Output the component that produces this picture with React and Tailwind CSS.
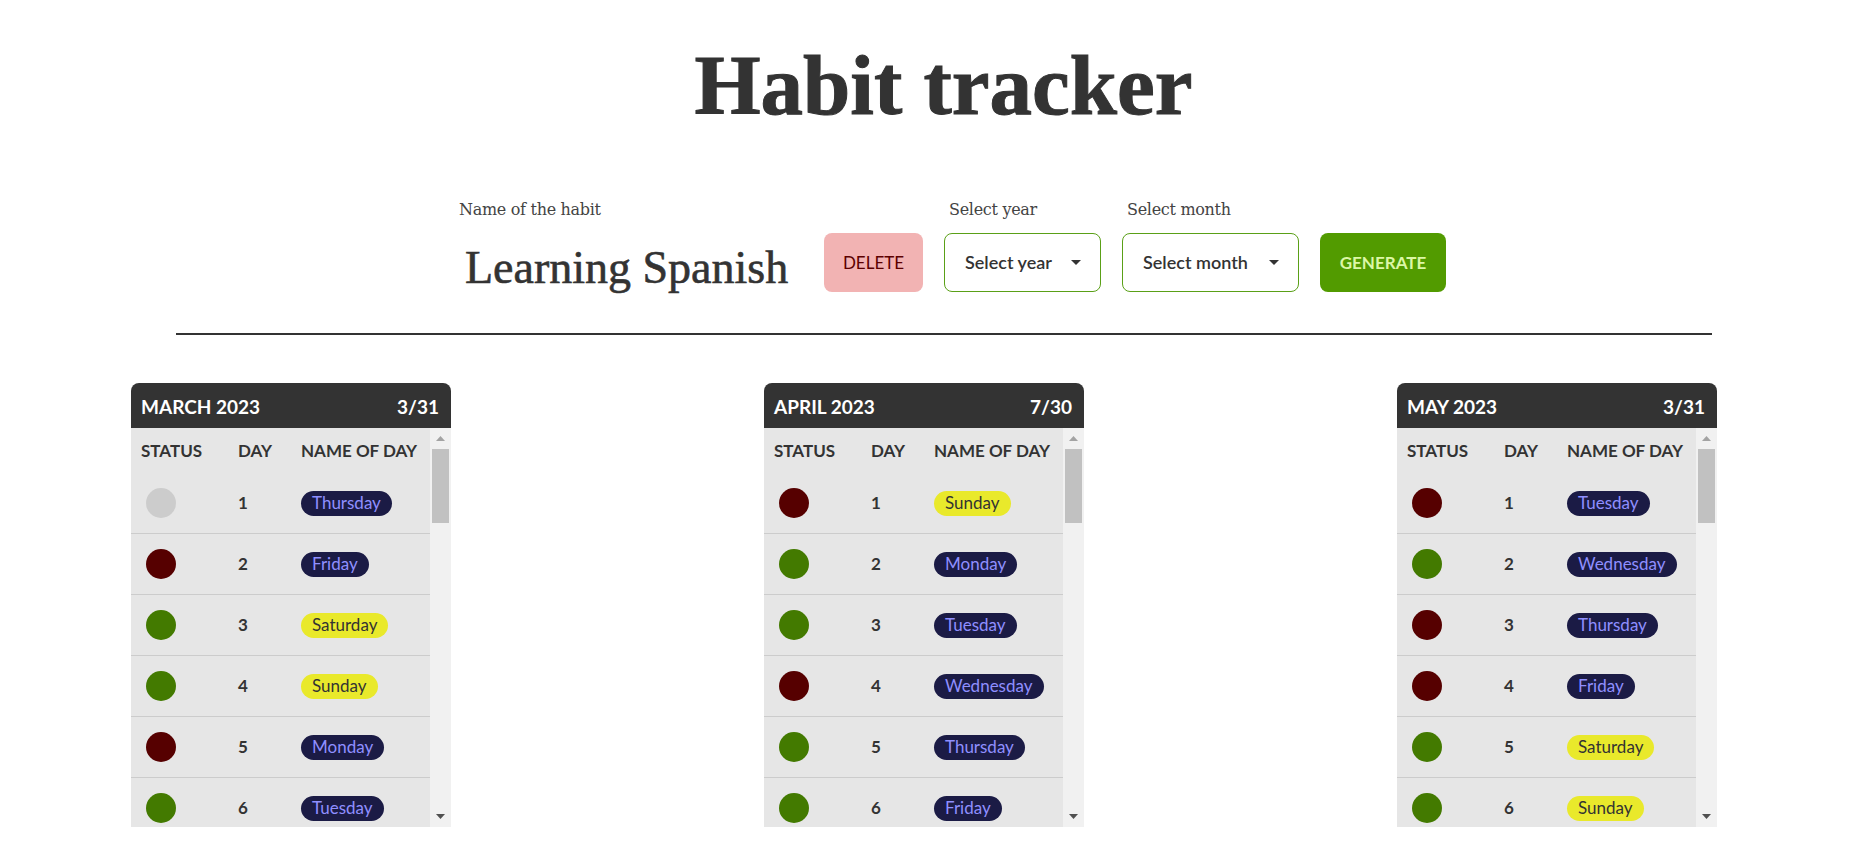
import React from 'react';

const DAY_NAMES = ['Sunday', 'Monday', 'Tuesday', 'Wednesday', 'Thursday', 'Friday', 'Saturday'];

// s: 'g' done, 'r' missed, 'n' not yet
const months = [
  { title: 'MARCH 2023', days: 31, start: 4, status: 'nrggrg'.padEnd(31, 'n'), done: 3 },
  { title: 'APRIL 2023', days: 30, start: 0, status: 'rggrggrgrgg'.padEnd(30, 'n'), done: 7 },
  { title: 'MAY 2023', days: 31, start: 2, status: 'rgrrgg'.padEnd(31, 'n'), done: 3 },
];

// only the rows that fit in the visible part of the list
const VISIBLE_ROWS = 6;

const dotColor = {
  g: 'bg-[#437a00]',
  r: 'bg-[#560000]',
  n: 'bg-[#cccccc]',
};

const DayPill = ({ name }) => {
  const weekend = name === 'Saturday' || name === 'Sunday';
  return (
    <span
      className={
        weekend
          ? 'inline-flex items-center h-[25px] px-[11px] rounded-full bg-[#e9e92b] text-[#333333] text-[17px]'
          : 'inline-flex items-center h-[25px] px-[11px] rounded-full bg-[#1b1b45] text-[#8f8fff] text-[17px]'
      }
    >
      {name}
    </span>
  );
};

const MonthTable = ({ month }) => {
  const rows = Array.from({ length: VISIBLE_ROWS }, (_, i) => ({
    day: i + 1,
    name: DAY_NAMES[(month.start + i) % 7],
    status: month.status[i],
  }));

  return (
    <div className="w-[320px] font-['Lato',sans-serif]">
      <div className="h-[45px] bg-[#333333] rounded-t-[8px] flex items-center justify-between pl-[10px] pr-[12px] pt-[3px] text-white font-bold text-[19px]">
        <span>{month.title}</span>
        <span>{month.done}/{month.days}</span>
      </div>
      <div className="flex h-[399px]">
        <div className="w-[299px] bg-[#e6e6e6] overflow-hidden text-[#333333]">
          <div className="flex items-center h-[45px] pt-[1px] font-bold text-[17px]">
            <div className="w-[107px] pl-[10px]">STATUS</div>
            <div className="w-[63px]">DAY</div>
            <div>NAME OF DAY</div>
          </div>
          {rows.map((row) => (
            <div key={row.day} className="flex items-center h-[61px] border-b border-[#cccccc] shrink-0">
              <div className="w-[107px] pl-[15px]">
                <div className={`w-[30px] h-[30px] rounded-full ${dotColor[row.status]}`} />
              </div>
              <div className="w-[63px] font-bold text-[17px]">{row.day}</div>
              <div>
                <DayPill name={row.name} />
              </div>
            </div>
          ))}
        </div>
        {/* scrollbar */}
        <div className="w-[21px] bg-[#f1f1f1] flex flex-col items-center">
          <div className="h-[21px] flex items-center justify-center">
            <svg width="9" height="5" viewBox="0 0 9 5">
              <polygon points="0,5 9,5 4.5,0" fill="#a3a3a3" />
            </svg>
          </div>
          <div className="w-[17px] h-[74px] bg-[#c1c1c1]" />
          <div className="flex-1" />
          <div className="h-[21px] flex items-center justify-center">
            <svg width="9" height="5" viewBox="0 0 9 5">
              <polygon points="0,0 9,0 4.5,5" fill="#505050" />
            </svg>
          </div>
        </div>
      </div>
    </div>
  );
};

const Caret = () => (
  <svg width="10" height="5" viewBox="0 0 10 5">
    <polygon points="0,0 10,0 5,5" fill="#333333" />
  </svg>
);

export default function App() {
  return (
    <div className="w-[1865px] h-[865px] overflow-hidden bg-white text-[#333333]">
      <div className="pt-[43px] pl-[22px] text-center">
        <h1 className="font-['Liberation_Serif',serif] font-bold text-[85px] leading-none text-[#333333] [-webkit-text-stroke:1px_#333333]">
          Habit tracker
        </h1>
      </div>

      <div className="mt-[72px] ml-[459px] flex items-end gap-[21px]">
        <div className="w-[344px]">
          <label className="block font-['DejaVu_Serif',serif] text-[16px] text-[#444444] leading-[20px] mb-[13px] tracking-[-0.3px]">
            Name of the habit
          </label>
          <div className="h-[59px] pt-[12px] pl-[6px] font-['Liberation_Serif',serif] text-[46px] leading-[46px] text-[#333333] whitespace-nowrap [-webkit-text-stroke:0.6px_#333333]">
            Learning Spanish
          </div>
        </div>

        <button className="w-[99px] h-[59px] rounded-[8px] bg-[#f2b3b3] text-[#5c0000] text-[17px] font-['Lato',sans-serif]">
          DELETE
        </button>

        <div className="w-[157px]">
          <label className="block pl-[5px] font-['DejaVu_Serif',serif] text-[16px] text-[#444444] leading-[20px] mb-[13px] tracking-[-0.3px]">
            Select year
          </label>
          <div className="h-[59px] rounded-[8px] border border-[#5aa017] flex items-center justify-between pl-[20px] pr-[19px] font-['Lato',sans-serif] text-[18px] font-semibold text-[#333333]">
            <span>Select year</span>
            <Caret />
          </div>
        </div>

        <div className="w-[177px]">
          <label className="block pl-[5px] font-['DejaVu_Serif',serif] text-[16px] text-[#444444] leading-[20px] mb-[13px] tracking-[-0.3px]">
            Select month
          </label>
          <div className="h-[59px] rounded-[8px] border border-[#5aa017] flex items-center justify-between pl-[20px] pr-[19px] font-['Lato',sans-serif] text-[18px] font-semibold text-[#333333]">
            <span>Select month</span>
            <Caret />
          </div>
        </div>

        <button className="w-[126px] h-[59px] rounded-[8px] bg-[#529b00] text-[#dcf7a6] text-[17px] font-bold font-['Lato',sans-serif]">
          GENERATE
        </button>
      </div>

      <div className="mt-[41px] ml-[176px] w-[1536px] h-[2px] bg-[#333333]" />

      <div className="mt-[48px] pl-[131px] flex gap-[313px]">
        {months.map((m) => (
          <MonthTable key={m.title} month={m} />
        ))}
      </div>
    </div>
  );
}
